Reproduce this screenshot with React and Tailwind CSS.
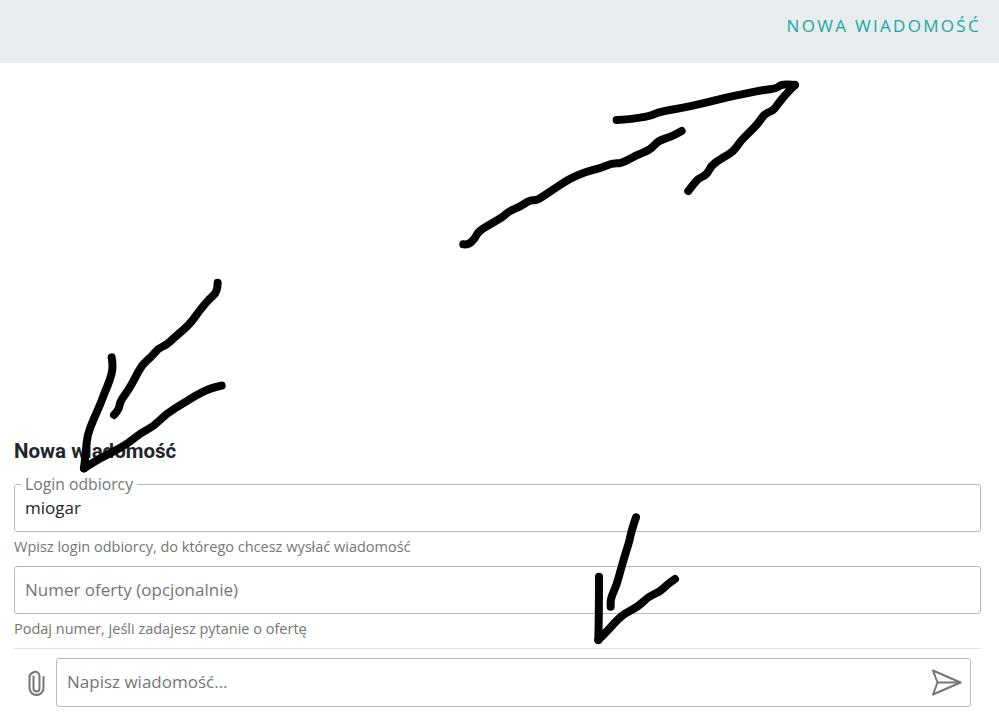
import React from 'react';

const arrows = [
  {
    at: 'translate(440 70) scale(0.3333)',
    lines: [
      '70,523 85,525 105,505 115,485 150,463 190,440 205,425 240,410 270,390 290,392 330,365 390,325 440,305 480,295 515,280 545,280 590,255 630,240 655,212 695,200 725,183',
      '530,150 570,148 630,138 660,125 720,115 790,100 860,82 920,70 970,60 1010,55 1025,42 1065,45',
      '1065,45 1040,70 1015,100 1000,122 975,130 955,160 925,190 900,215 880,245 850,262 815,285 800,315 775,325 755,350 745,363',
    ],
  },
  {
    at: 'translate(60 270) scale(0.3333)',
    lines: [
      '473,38 473,65 445,90 420,120 395,155 370,180 340,205 320,225 295,235 275,260 245,285 225,325 205,360 180,395 178,415 162,435',
      '155,262 160,290 150,330 135,365 120,405 100,450 82,495 78,540 72,595',
      '72,595 110,570 160,545 205,520 240,490 280,470 320,430 370,400 410,375 450,355 485,347',
    ],
  },
  {
    at: 'translate(580 505) scale(0.3333)',
    lines: [
      '168,37 155,75 148,110 135,150 122,195 110,240 92,280 92,305',
      '57,215 57,300 55,405',
      '55,405 85,375 125,330 175,305 205,275 240,260 260,240 285,222',
    ],
  },
];

// round the hand drawn points off with quadratic curves through the midpoints
const toPath = (line) => {
  const pts = line.split(' ').map((p) => p.split(',').map(Number));
  let d = `M${pts[0][0]} ${pts[0][1]}`;
  for (let i = 1; i < pts.length - 1; i++) {
    const mx = (pts[i][0] + pts[i + 1][0]) / 2;
    const my = (pts[i][1] + pts[i + 1][1]) / 2;
    d += ` Q${pts[i][0]} ${pts[i][1]} ${mx} ${my}`;
  }
  const last = pts[pts.length - 1];
  return `${d} L${last[0]} ${last[1]}`;
};

const App = () => {
  return (
    <div className="relative flex h-screen flex-col bg-white font-['Open_Sans',sans-serif]">
      {/* top bar */}
      <div className="flex h-[63px] items-start justify-end bg-[#e9ecef] pr-[18px] pt-[14px]">
        <a className="text-[17px] uppercase leading-[24px] tracking-[2.3px] text-[#17a9a0]">
          Nowa wiadomość
        </a>
      </div>

      {/* form */}
      <div className="flex flex-1 flex-col justify-end pb-[18px] pl-[14px] pr-[18px]">
        <h2 className="mb-[14px] font-['Roboto',sans-serif] text-[20.5px] font-bold leading-[24px] text-[#212529]">
          Nowa wiadomość
        </h2>

        <fieldset className="h-[55px] rounded-[3px] border border-[#b9b9b9] pl-[6px] pr-[10px]">
          <legend className="px-[4px] text-[15.75px] leading-[14px] text-[#757575]">
            Login odbiorcy
          </legend>
          <input
            readOnly
            value="miogar"
            className="mt-[5px] w-full pl-[4px] text-[17px] leading-[24px] text-[#212529] outline-none"
          />
        </fieldset>
        <p className="mt-[5px] text-[14.5px] leading-[20px] text-[#757575]">
          Wpisz login odbiorcy, do którego chcesz wysłać wiadomość
        </p>

        <input
          readOnly
          placeholder="Numer oferty (opcjonalnie)"
          className="mt-[9px] h-[48px] w-full rounded-[3px] border border-[#b9b9b9] px-[10px] pb-[2px] text-[17px] outline-none placeholder:text-[#757575]"
        />
        <p className="mt-[5px] text-[14.5px] leading-[20px] text-[#757575]">
          Podaj numer, jeśli zadajesz pytanie o ofertę
        </p>

        <div className="mt-[9px] flex items-center gap-[11px] border-t border-[#e3e3e3] pr-[10px] pt-[9px]">
          <button className="ml-[14px] shrink-0">
            <svg width="17" height="26" viewBox="0 0 17 26" fill="none" stroke="#757575" strokeWidth="2" strokeLinecap="round" className="block">
              <path d="M5.5 6.5 V18.5 A3 3 0 0 0 11.5 18.5 V5.5 A4.2 4.2 0 0 0 5 2.5 C2.5 3.5 1.5 5 1.5 7 V18 A7 7 0 0 0 15.5 18 V7" />
            </svg>
          </button>
          <div className="flex h-[49px] flex-1 items-center rounded-[3px] border border-[#b9b9b9] pl-[10px] pr-[8px]">
            <input
              readOnly
              placeholder="Napisz wiadomość…"
              className="min-w-0 flex-1 pb-[2px] text-[17px] outline-none placeholder:text-[#757575]"
            />
            <button className="shrink-0">
              <svg width="31" height="27" viewBox="0 0 31 27" fill="none" stroke="#757575" strokeWidth="2" strokeLinejoin="round" className="block">
                <path d="M2 1.5 L29.5 13.5 L2 25.5 L6.5 13.5 Z" />
                <path d="M6.5 13.5 H29.5" />
              </svg>
            </button>
          </div>
        </div>
      </div>

      {/* marker scribbles drawn over the page */}
      <svg className="pointer-events-none absolute inset-0" width="999" height="725" fill="none" stroke="#000" strokeWidth="24" strokeLinecap="round" strokeLinejoin="round">
        {arrows.map((arrow) => (
          <g key={arrow.at} transform={arrow.at}>
            {arrow.lines.map((line) => (
              <path key={line} d={toPath(line)} />
            ))}
          </g>
        ))}
      </svg>
    </div>
  );
};

export default App;
